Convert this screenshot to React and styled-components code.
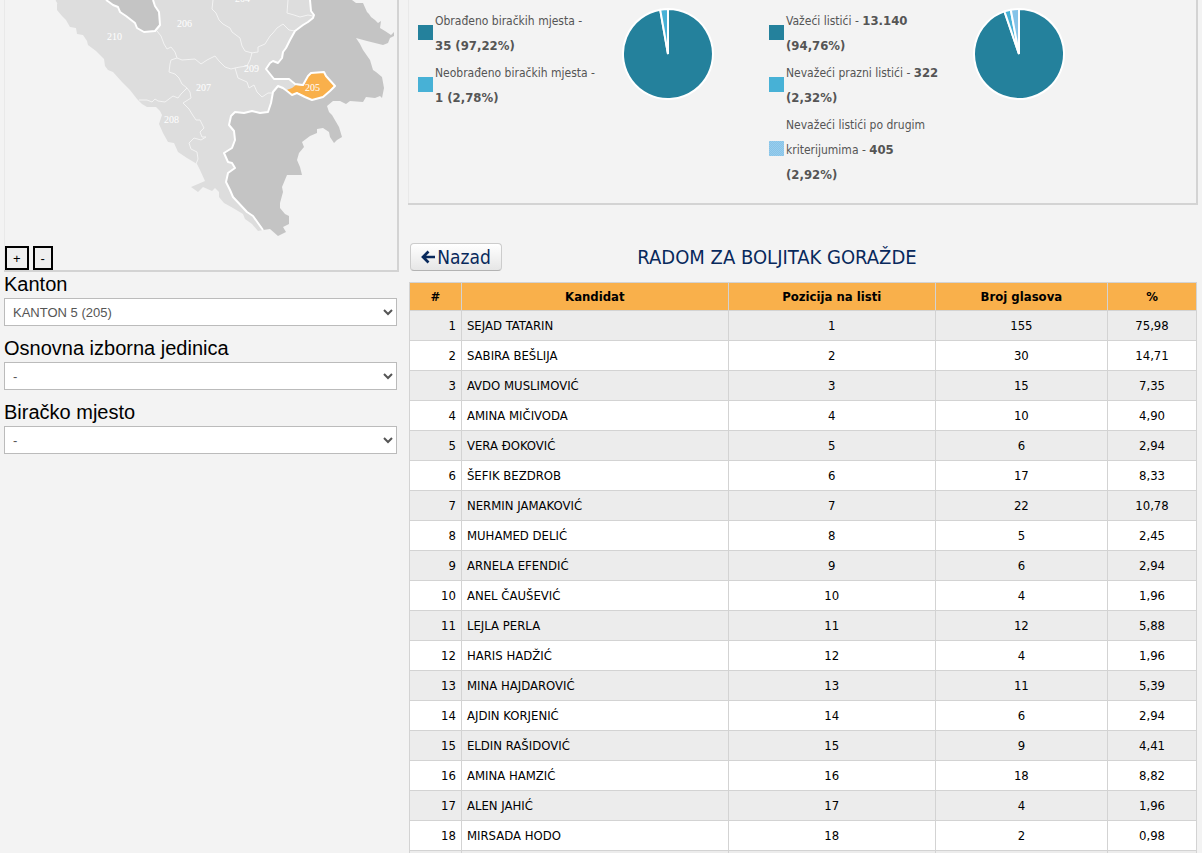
import React, { useState } from "react";
import styled, { createGlobalStyle } from "styled-components";

const candidates = [
    ["SEJAD TATARIN", "155", "75,98"],
    ["SABIRA BEŠLIJA", "30", "14,71"],
    ["AVDO MUSLIMOVIĆ", "15", "7,35"],
    ["AMINA MIČIVODA", "10", "4,90"],
    ["VERA ĐOKOVIĆ", "6", "2,94"],
    ["ŠEFIK BEZDROB", "17", "8,33"],
    ["NERMIN JAMAKOVIĆ", "22", "10,78"],
    ["MUHAMED DELIĆ", "5", "2,45"],
    ["ARNELA EFENDIĆ", "6", "2,94"],
    ["ANEL ČAUŠEVIĆ", "4", "1,96"],
    ["LEJLA PERLA", "12", "5,88"],
    ["HARIS HADŽIĆ", "4", "1,96"],
    ["MINA HAJDAROVIĆ", "11", "5,39"],
    ["AJDIN KORJENIĆ", "6", "2,94"],
    ["ELDIN RAŠIDOVIĆ", "9", "4,41"],
    ["AMINA HAMZIĆ", "18", "8,82"],
    ["ALEN JAHIĆ", "4", "1,96"],
    ["MIRSADA HODO", "2", "0,98"],
];

const stations = [
    { label: "Obrađeno biračkih mjesta", count: "35", pct: 97.22, color: "#24819c" },
    { label: "Neobrađeno biračkih mjesta", count: "1", pct: 2.78, color: "#47b1d6" },
];

const ballots = [
    { label: "Važeći listići", count: "13.140", pct: 94.76, color: "#24819c" },
    { label: "Nevažeći prazni listići", count: "322", pct: 2.32, color: "#47b1d6" },
    { label: "Nevažeći listići po drugim kriterijumima", count: "405", pct: 2.92, color: "#86c3e8", dotted: true },
];

const filters = [
    { id: "kanton", label: "Kanton", option: "KANTON 5 (205)" },
    { id: "jedinica", label: "Osnovna izborna jedinica", option: "-" },
    { id: "mjesto", label: "Biračko mjesto", option: "-" },
];

const mapLabels = [
    ["210", 107, 40],
    ["206", 177, 27],
    ["204", 235, 2],
    ["209", 244, 72],
    ["207", 196, 91],
    ["208", 164, 123],
    ["205", 305, 91],
];

const formatPct = (pct) => pct.toFixed(2).replace(".", ",");

const Pie = ({ items }) => {
    let angle = 0;
    const point = (a) => {
        const rad = (a / 100) * Math.PI * 2;
        return `${(46 + 45 * Math.sin(rad)).toFixed(2)} ${(46 - 45 * Math.cos(rad)).toFixed(2)}`;
    };

    return (
        <PieSvg viewBox="0 0 92 92" role="img" aria-label="Grafikon">
            {items.map((item) => {
                const from = angle;
                angle += item.pct;
                return (
                    <path
                        key={item.label}
                        d={`M46 46L${point(from)}A45 45 0 ${item.pct > 50 ? 1 : 0} 1 ${point(angle)}Z`}
                        fill={item.color}
                        stroke="#fff"
                        strokeWidth="2"
                    />
                );
            })}
        </PieSvg>
    );
};

const Stats = ({ items }) => (
    <StatsBlock>
        <Legend>
            {items.map((item) => (
                <LegendItem key={item.label}>
                    <Swatch $color={item.color} $dotted={item.dotted} />
                    <LegendText>
                        {item.label} - <b>{item.count} ({formatPct(item.pct)}%)</b>
                    </LegendText>
                </LegendItem>
            ))}
        </Legend>
        <Pie items={items} />
    </StatsBlock>
);

const RegionMap = ({ zoom }) => (
    <MapSvg viewBox={`0 0 ${392 / zoom} ${245 / zoom}`} role="img" aria-label="Karta kantona">
        <g transform="translate(-5 0)" strokeLinejoin="round">
            <path
                fill="#ddd"
                d="M55 0L57 4 57 10 62 16 66 20 70 27 76 28 77 34 83 35 87 41 88 45 96 51 104 59 105 66 108 70 113 72 122 82 130 90 137 99 142 104 147 107 156 107 160 111 162 115 159 124 163 133 168 142 174 143 178 152 187 158 197 164 200 170 205 181 191 187 198 192 203 187 212 191 215 188 219 192 219 197 224 203 233 208 243 214 245 219 252 224 258 231 263 230 275 190 235 113 269 113 279 95 305 97 312 70 320 0Z"
            />
            <path
                fill="#c4c4c4"
                d="M310 0L311 11 314 15 313 18 308 22 303 25 295 31 290 40 286 48 283 52 282 58 278 63 273 61 270 63 266 69 270 74 274 79 289 79 295 84 303 85 308 76 311 73 324 72 326 76 335 86 330 91 323 97 312 100 305 97 297 93 292 95 287 91 278 87 273 92 271 103 268 112 235 112 231 116 229 125 234 131 235 140 232 148 224 153 228 162 232 163 235 168 228 173 226 182 230 190 233 197 247 212 253 216 263 230 270 229 278 236 282 234 286 232 283 227 289 224 289 216 285 214 280 208 280 203 283 192 282 187 287 175 302 175 300 167 297 160 299 153 304 147 302 142 310 136 317 133 317 129 323 128 329 132 330 137 334 143 337 140 342 137 339 127 332 115 329 112 327 106 333 101 340 101 346 104 350 101 363 102 366 97 375 98 380 96 382 98 384 88 382 77 376 72 373 70 370 60 363 50 360 44 356 38 367 41 383 45 388 43 390 38 394 36 394 32 391 35 385 31 380 28 381 21 378 23 375 20 371 17 369 14 367 12 363 3 356 3 352 0Z"
            />
            <path fill="#c4c4c4" d="M106 0L113 5 118 7 123 14 135 23 137 28 144 32 155 31 160 25 159 12 153 0Z" />
            <path fill="#ddd" d="M274 80L289 80 295 85 295 89 287 90 279 86 271 92Z" />
            <path
                fill="#f9b04b"
                d="M287 90L292 88 296 85 303 86 308 76 311 73 324 72 326 76 335 86 330 91 323 97 312 100 305 97 297 93 292 95Z"
            />
            <path
                fill="none"
                stroke="#f3f3f3"
                strokeWidth="1"
                d="M157 31L161 36 164 44 167 49 171 47 175 52 177 58 171 60 170 64 169 72 175 74 179 78 182 84 187 88 181 94 178 98 173 96 165 102 158 101 155 99 152 102 147 100 139 100M177 58L182 60 195 59 201 64 207 60 215 56 219 61 225 67 231 69 235 68 240 67 247 66 250 60 252 53 245 51 242 46 240 38 232 32 230 28 223 24 219 20 216 13 212 9 213 0M251 53L258 52 258 47 265 44 270 36 273 33 277 28 283 24 289 30 295 31M288 0L287 13 294 15 300 17 308 15 313 16M187 88L190 92 191 98 183 103 189 109 192 114 196 120 200 120 204 128 200 132 202 137 206 137 201 140 194 138 189 143 191 149 197 152 198 159 196 164M235 68L238 78 247 82 249 88 254 85 257 92 262 97 268 93 272 93M55 0L57 4"
            />
            <path
                fill="none"
                stroke="#fff"
                strokeWidth="2"
                d="M106 0L109 2 113 5 118 7 120 12 126 16 135 23 137 28 144 32 155 31 160 25 159 12 155 6 153 0M310 0L311 11 314 15 313 18 308 22 303 25 295 31 290 40 286 48 283 52 282 58 278 63 273 61 270 63 266 69 270 74 274 79 289 79 295 84 303 85 308 76 311 73 324 72 326 76 335 86 330 91 323 97 312 100 305 97 297 93 292 95 287 91 283 88 278 86 273 92 271 103 268 112 260 113 252 111 244 113 235 112 231 116 229 125 234 131 235 140 232 148 224 153 228 162 232 163 235 168 228 173 226 182 230 190 233 197 247 212 253 216 263 230"
            />
            <path fill="#f9b04b" d="M287 90L295 91 303 94 308 88 302 86 297 86 293 89Z" />
            {mapLabels.map(([code, x, y]) => (
                <MapLabel key={code} x={x} y={y}>{code}</MapLabel>
            ))}
        </g>
    </MapSvg>
);

const App = () => {
    const [zoom, setZoom] = useState(1);

    return (
        <>
            <GlobalStyle />
            <Page>
                <aside>
                    <MapPanel>
                        <RegionMap zoom={zoom} />
                        <ZoomButtons>
                            <ZoomBtn onClick={() => setZoom(zoom * 1.25)}>+</ZoomBtn>
                            <ZoomBtn onClick={() => setZoom(zoom / 1.25)}>-</ZoomBtn>
                        </ZoomButtons>
                    </MapPanel>
                    {filters.map((filter) => (
                        <Field key={filter.id}>
                            <FieldLabel htmlFor={filter.id}>{filter.label}</FieldLabel>
                            <Select id={filter.id}>
                                <option>{filter.option}</option>
                            </Select>
                        </Field>
                    ))}
                </aside>
                <main>
                    <StatsPanel>
                        <Stats items={stations} />
                        <Stats items={ballots} />
                    </StatsPanel>
                    <TitleBar>
                        <BackBtn>
                            <svg width="14" height="14" viewBox="0 0 14 14" aria-hidden="true">
                                <path d="M14 7H2.5M7.5 1.5L2 7L7.5 12.5" fill="none" stroke="#08295c" strokeWidth="2.7" />
                            </svg>
                            Nazad
                        </BackBtn>
                        <Title>RADOM ZA BOLJITAK GORAŽDE</Title>
                    </TitleBar>
                    <Table>
                        <colgroup>
                            <Col $width="6.6%" />
                            <Col $width="33.9%" />
                            <Col $width="26.3%" />
                            <Col $width="21.9%" />
                            <Col $width="11.3%" />
                        </colgroup>
                        <thead>
                            <tr>
                                <Th>#</Th>
                                <Th>Kandidat</Th>
                                <Th>Pozicija na listi</Th>
                                <Th>Broj glasova</Th>
                                <Th>%</Th>
                            </tr>
                        </thead>
                        <tbody>
                            {candidates.map(([name, votes, pct], i) => (
                                <Row key={name}>
                                    <Td $align="right">{i + 1}</Td>
                                    <Td $align="left">{name}</Td>
                                    <Td>{i + 1}</Td>
                                    <Td>{votes}</Td>
                                    <Td>{pct}</Td>
                                </Row>
                            ))}
                            <Row>
                                <Td />
                                <Td />
                                <Td />
                                <Td />
                                <Td />
                            </Row>
                        </tbody>
                    </Table>
                </main>
            </Page>
        </>
    );
};

export default App;

const GlobalStyle = createGlobalStyle`
    * {
        box-sizing: border-box;
    }

    body {
        margin: 0;
        background: #f3f3f3;
        color: #000;
        font-family: Tahoma, "DejaVu Sans Condensed", "DejaVu Sans", sans-serif;
    }
`

const Page = styled.div`
    display: grid;
    grid-template-columns: 1fr 2fr;
    gap: 9px;
    padding: 0 4px;
    height: 100vh;
    overflow: hidden;
`

const MapPanel = styled.section`
    border: solid #d3d3d3;
    border-width: 0 2px 2px 0;
    box-shadow: inset 1px 0 #e9e9e9;
`

const MapSvg = styled.svg`
    display: block;
    width: 100%;
    height: 245px;
    padding-left: 1px;
`

const MapLabel = styled.text`
    fill: #fff;
    font-family: "Liberation Serif", serif;
    font-size: 10px;
`

const ZoomButtons = styled.div`
    display: flex;
    gap: 4px;
    padding: 1px 1px 0;
`

const ZoomBtn = styled.button`
    height: 24px;
    padding: 0 6px;
    border: 2px solid #000;
    background: #efefef;
    color: #000;
    font: 13px "Liberation Sans", Arial, sans-serif;
    cursor: pointer;
`

const Field = styled.div`
    margin-bottom: 10px;
`

const FieldLabel = styled.label`
    display: block;
    padding-bottom: 2px;
    font-family: "Liberation Sans", Arial, sans-serif;
    font-size: 20px;
    line-height: 24px;
`

const Select = styled.select`
    display: block;
    width: 100%;
    max-width: 393px;
    height: 28px;
    padding: 0 4px;
    border: 1px solid #bbb;
    border-radius: 0;
    background: #fff;
    color: #555;
    font-family: "Liberation Sans", Arial, sans-serif;
    font-size: 13px;
`

const StatsPanel = styled.section`
    display: flex;
    gap: 8px;
    padding: 8px 8px 15px;
    border: solid #d3d3d3;
    border-width: 0 2px 2px 0;
    box-shadow: inset 1px 0 #e9e9e9;
    color: #555;
`

const StatsBlock = styled.div`
    display: flex;
    align-items: flex-start;
    justify-content: space-between;
    width: 343px;
    padding: 0 45px 0 2px;
`

const Legend = styled.ul`
    display: flex;
    flex-direction: column;
    gap: 2px;
    width: 190px;
    margin: 0;
    padding: 1px 0 0;
    list-style: none;
`

const LegendItem = styled.li`
    display: flex;
    align-items: center;
    gap: 2px;
`

const Swatch = styled.span`
    flex: none;
    width: 15px;
    height: 15px;
    margin-bottom: 4px;
    background: ${(props) => props.$dotted
        ? `repeating-conic-gradient(${props.$color} 0 25%, #99cdec 0 50%) 0 0 / 2px 2px`
        : props.$color};
`

const LegendText = styled.span`
    width: 162px;
    font-size: 12px;
    line-height: 25px;

    b {
        font-size: 13px;
        line-height: 1;
    }
`

const PieSvg = styled.svg`
    flex: none;
    width: 92px;
    height: 92px;
`

const TitleBar = styled.header`
    display: flex;
    align-items: center;
    padding: 38px 146px 11px 2px;
`

const BackBtn = styled.button`
    display: flex;
    align-items: center;
    justify-content: center;
    gap: 2px;
    width: 92px;
    height: 28px;
    padding: 0;
    border: 1px solid #ccc;
    border-bottom-color: #b3b3b3;
    border-radius: 4px;
    background: linear-gradient(#fff, #e6e6e6);
    color: #08295c;
    font: 19px "DejaVu Sans Condensed", sans-serif;
    cursor: pointer;
`

const Title = styled.h1`
    flex: 1;
    margin: 0;
    color: #08295c;
    font-size: 20px;
    font-weight: normal;
    line-height: 24px;
    text-align: center;
`

const Table = styled.table`
    width: calc(100% - 2px);
    margin: 0 1px;
    border-collapse: collapse;
    table-layout: fixed;
    font-size: 13px;
`

const Col = styled.col`
    width: ${(props) => props.$width};
`

const Th = styled.th`
    height: 28px;
    padding: 0 5px;
    border: 1px solid #d3d3d3;
    background: #f9b04b;
    font-weight: bold;
`

const Row = styled.tr`
    background: #fff;

    &:nth-child(odd) {
        background: #ececec;
    }
`

const Td = styled.td`
    height: 30px;
    padding: 0 5px;
    border: 1px solid #d3d3d3;
    text-align: ${(props) => props.$align || "center"};
`
